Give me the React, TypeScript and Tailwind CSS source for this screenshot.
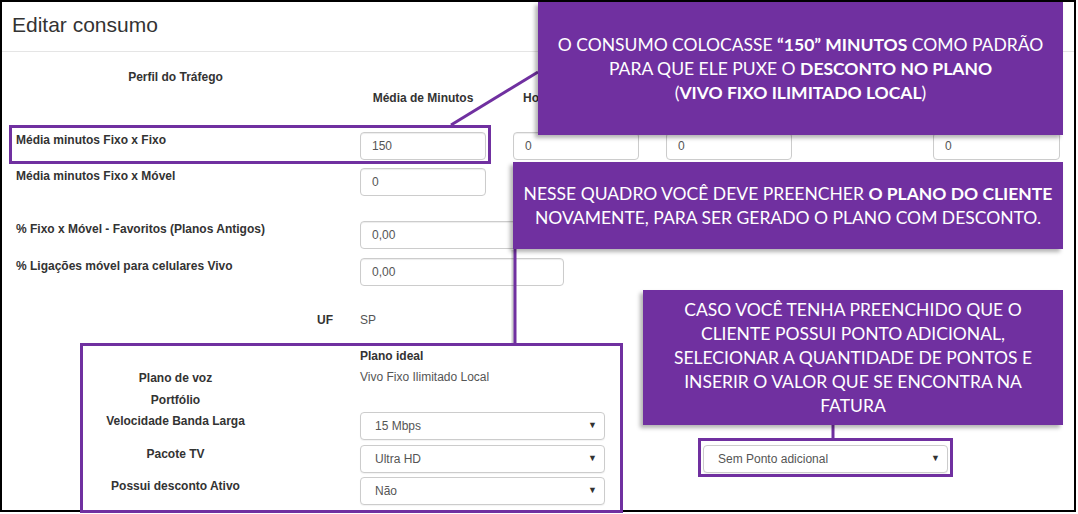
import React from 'react';

const PURPLE = '#7030a0';

const TextInput = ({ value, className = 'w-[126px]' }: { value: string; className?: string }) => (
  <div
    className={`${className} h-[28px] shrink-0 rounded-[4px] border border-[#ccc] bg-white pl-[11px] flex items-center text-[12px] text-[#555] shadow-[inset_0_1px_1px_rgba(0,0,0,0.075)]`}
  >
    {value}
  </div>
);

const SelectBox = ({ value, className = '' }: { value: string; className?: string }) => (
  <div
    className={`w-[245px] h-[28px] shrink-0 rounded-[4px] border border-[#ccc] bg-white pl-[14px] pr-[7px] flex items-center justify-between text-[12px] text-[#555] shadow-[0_1px_1px_rgba(0,0,0,0.05)] ${className}`}
  >
    <span>{value}</span>
    <span className="text-[9px] text-[#333]">▼</span>
  </div>
);

const Label = ({ children, center = false }: { children: React.ReactNode; center?: boolean }) => (
  <div
    className={`w-[319px] shrink-0 ml-[14px] mr-[25px] pt-[1px] text-[12px] leading-[14px] font-bold text-[#333] ${center ? 'text-center' : ''}`}
  >
    {children}
  </div>
);

export default function App() {
  return (
    <div className="relative w-[1078px] h-[514px] bg-white font-['Liberation_Sans',Arial,sans-serif] overflow-hidden">
      {/* the form itself */}
      <div className="w-[1076px] h-[512px] border-2 border-black bg-white">
        <div className="h-[50px] border-b border-[#e5e5e5] pl-[10px] pt-[12px]">
          <h1 className="text-[21px] leading-[22px] text-[#333]">Editar consumo</h1>
        </div>

        <div className="flex mt-[17px]">
          <Label center>Perfil do Tráfego</Label>
        </div>
        <div className="flex mt-[7px] text-[12px] leading-[14px] font-bold text-[#333]">
          <div className="w-[358px] shrink-0" />
          <div className="w-[126px] text-center">Média de Minutos</div>
          <div className="w-[27px]" />
          <div className="w-[126px] pl-[10px] whitespace-nowrap">Horário Normal</div>
        </div>

        <div className="flex mt-[27px]">
          <Label>Média minutos Fixo x Fixo</Label>
          <TextInput value="150" />
          <TextInput value="0" className="w-[126px] ml-[27px]" />
          <TextInput value="0" className="w-[126px] ml-[27px]" />
          <TextInput value="0" className="w-[127px] ml-[141px]" />
        </div>
        <div className="flex mt-[8px]">
          <Label>Média minutos Fixo x Móvel</Label>
          <TextInput value="0" />
        </div>
        <div className="flex mt-[25px]">
          <Label>% Fixo x Móvel - Favoritos (Planos Antigos)</Label>
          <TextInput value="0,00" className="w-[204px]" />
        </div>
        <div className="flex mt-[9px]">
          <Label>% Ligações móvel para celulares Vivo</Label>
          <TextInput value="0,00" className="w-[204px]" />
        </div>

        <div className="flex mt-[27px] text-[12px] leading-[14px]">
          <div className="w-[319px] ml-[14px] mr-[25px] pr-[2px] text-right font-bold text-[#333]">UF</div>
          <div className="text-[#555]">SP</div>
        </div>
        <div className="flex mt-[22px] text-[12px] leading-[14px]">
          <div className="w-[358px]" />
          <div className="font-bold text-[#333]">Plano ideal</div>
        </div>
        <div className="flex mt-[7px] text-[12px] leading-[14px]">
          <Label center>Plano de voz</Label>
          <div className="text-[#555]">Vivo Fixo Ilimitado Local</div>
        </div>
        <div className="flex mt-[7px]">
          <Label center>Portfólio</Label>
        </div>
        <div className="flex mt-[5px]">
          <Label center>
            <div className="pt-[1px]">Velocidade Banda Larga</div>
          </Label>
          <SelectBox value="15 Mbps" />
        </div>
        <div className="flex mt-[5px]">
          <Label center>
            <div className="pt-[1px]">Pacote TV</div>
          </Label>
          <SelectBox value="Ultra HD" />
          <SelectBox value="Sem Ponto adicional" className="ml-[98px]" />
        </div>
        <div className="flex mt-[4px]">
          <Label center>
            <div className="pt-[1px]">Possui desconto Ativo</div>
          </Label>
          <SelectBox value="Não" />
        </div>
      </div>

      {/* annotation layer */}
      <div className="absolute left-[9px] top-[125px] w-[482px] h-[39px] border-[3px] border-[#7030a0]" />
      <div className="absolute left-[80px] top-[343px] w-[543px] h-[170px] border-[3px] border-[#7030a0]" />
      <div className="absolute left-[698px] top-[438px] w-[255px] h-[39px] border-[3px] border-[#7030a0]" />

      <svg className="absolute inset-0 pointer-events-none" width={1078} height={514}>
        <line x1={513} y1={250} x2={513} y2={343} stroke="rgba(0,0,0,0.18)" strokeWidth={3} />
        <line x1={538} y1={72} x2={451} y2={125} stroke={PURPLE} strokeWidth={3} />
        <line x1={515} y1={249} x2={515} y2={343} stroke={PURPLE} strokeWidth={3} />
        <line x1={833} y1={425} x2={833} y2={438} stroke={PURPLE} strokeWidth={3} />
      </svg>

      <div className="absolute left-[538px] top-[2px] w-[525px] h-[133px] bg-[#7030a0] shadow-[-3px_3px_4px_rgba(0,0,0,0.3)] flex items-center justify-center text-center text-white font-['Lato','Open_Sans',sans-serif] text-[17.5px] leading-[24px] whitespace-nowrap">
        <div>
          O CONSUMO COLOCASSE <b>“150” MINUTOS</b> COMO PADRÃO
          <br />
          PARA QUE ELE PUXE O <b>DESCONTO NO PLANO</b>
          <br />
          (<b>VIVO FIXO ILIMITADO LOCAL</b>)
        </div>
      </div>

      <div className="absolute left-[513px] top-[162px] w-[550px] h-[87px] bg-[#7030a0] shadow-[-3px_3px_4px_rgba(0,0,0,0.3)] flex items-center justify-center text-center text-white font-['Lato','Open_Sans',sans-serif] text-[17.5px] leading-[24px] whitespace-nowrap">
        <div>
          NESSE QUADRO VOCÊ DEVE PREENCHER <b>O PLANO DO CLIENTE</b>
          <br />
          NOVAMENTE, PARA SER GERADO O PLANO COM DESCONTO.
        </div>
      </div>

      <div className="absolute left-[643px] top-[290px] w-[420px] h-[135px] bg-[#7030a0] shadow-[-3px_3px_4px_rgba(0,0,0,0.3)] flex items-center justify-center text-center text-white font-['Lato','Open_Sans',sans-serif] text-[17.5px] leading-[24px] whitespace-nowrap">
        <div>
          CASO VOCÊ TENHA PREENCHIDO QUE O
          <br />
          CLIENTE POSSUI PONTO ADICIONAL,
          <br />
          SELECIONAR A QUANTIDADE DE PONTOS E
          <br />
          INSERIR O VALOR QUE SE ENCONTRA NA
          <br />
          FATURA
        </div>
      </div>
    </div>
  );
}
